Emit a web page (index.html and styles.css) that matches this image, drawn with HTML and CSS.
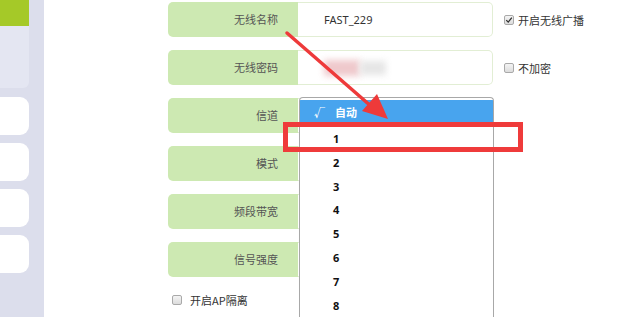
FILE: index.html
```html
<!DOCTYPE html>
<html lang="zh">
<head>
<meta charset="utf-8">
<link rel="stylesheet" href="styles.css">
</head>
<body>
<div class="page">
  <aside class="sidebar">
    <div class="nav-active"></div>
    <div class="nav-sub"></div>
    <div class="nav-item"></div>
    <div class="nav-item"></div>
    <div class="nav-item"></div>
    <div class="nav-item"></div>
  </aside>
  <main class="form">
    <div class="row">
      <div class="label">无线名称</div>
      <div class="field"><span class="value">FAST_229</span></div>
      <label class="opt"><span class="cb checked"><svg viewBox="0 0 10 10" width="8" height="8"><path d="M1.5 5.2 L4 7.6 L8.6 2" fill="none" stroke="#333" stroke-width="1.6"/></svg></span>开启无线广播</label>
    </div>
    <div class="row">
      <div class="label">无线密码</div>
      <div class="field"><span class="pw"><span class="pw-a"></span><span class="pw-b"></span></span></div>
      <label class="opt"><span class="cb"></span>不加密</label>
    </div>
    <div class="row">
      <div class="label">信道</div>
      <div class="field"></div>
    </div>
    <div class="row">
      <div class="label">模式</div>
      <div class="field"></div>
    </div>
    <div class="row">
      <div class="label">频段带宽</div>
      <div class="field"></div>
    </div>
    <div class="row">
      <div class="label">信号强度</div>
      <div class="field"></div>
    </div>
    <label class="ap"><span class="cb"></span>开启AP隔离</label>
  </main>
</div>

<div class="dropdown">
  <div class="dd-head"><span class="tick">√</span><span>自动</span></div>
  <ul class="dd-list">
    <li>1</li><li>2</li><li>3</li><li>4</li><li>5</li><li>6</li><li>7</li><li>8</li>
  </ul>
</div>

<div class="highlight"></div>

<svg class="arrow" width="620" height="317" viewBox="0 0 620 317">
  <line x1="287" y1="33" x2="372" y2="107" stroke="#ee3a3a" stroke-width="3.5" stroke-linecap="round"/>
  <polygon points="388,119 362,111 377,94" fill="#ee3a3a"/>
</svg>
</body>
</html>
```

FILE: styles.css
```css
* { box-sizing: border-box; }
html, body { margin: 0; padding: 0; }
body {
  width: 620px;
  height: 317px;
  overflow: hidden;
  background: #fff;
  font-family: "Noto Sans CJK SC", "Noto Sans", sans-serif;
  font-size: 11px;
  color: #444;
  position: relative;
}
.page { display: flex; height: 317px; }

.sidebar {
  width: 44px;
  flex: none;
  background: #dcdeec;
  display: flex;
  flex-direction: column;
}
.nav-active { width: 29px; height: 26px; background: #a5c928; }
.nav-sub {
  width: 29px; height: 62px;
  background: #e4e6f2;
  border-bottom-right-radius: 6px;
  margin-bottom: 9px;
}
.nav-item {
  width: 29px; height: 38px;
  background: #fff;
  border-radius: 0 9px 9px 0;
  margin-bottom: 8px;
}

.form {
  padding: 2px 0 0 124px;
  display: flex;
  flex-direction: column;
  gap: 13px;
}
.row { display: flex; align-items: center; height: 35px; }
.label {
  width: 130px; height: 35px;
  background: #cde9b2;
  border-radius: 5px 0 0 5px;
  text-align: right;
  padding-right: 20px;
  line-height: 35px;
  color: #555;
}
.field {
  width: 195px; height: 35px;
  border: 1px solid #e2eed4;
  border-left: none;
  border-radius: 0 5px 5px 0;
  display: flex;
  align-items: center;
  padding-left: 26px;
}
.value { color: #333; font-family: "Noto Sans", sans-serif; font-size: 11px; }
.pw { display: flex; align-items: center; }
.pw-a { width: 36px; height: 16px; background: #efc9cc; filter: blur(3px); }
.pw-b { width: 26px; height: 14px; background: #e6e6e6; filter: blur(3px); }

.opt { display: flex; align-items: center; margin-left: 11px; color: #333; }
.cb {
  width: 10px; height: 10px;
  border: 1px solid #a9a9a9;
  border-radius: 2px;
  background: linear-gradient(#f4f4f4, #dcdcdc);
  margin-right: 4px;
  display: inline-flex;
  align-items: center;
  justify-content: center;
}
.ap { display: flex; align-items: center; margin: 2px 0 0 4px; color: #333; }
.ap .cb { margin-right: 8px; }

.dropdown {
  position: absolute;
  left: 299px; top: 97px;
  width: 195px; height: 222px;
  border: 1px solid #a8a8a8;
  border-bottom: none;
  border-radius: 4px 4px 0 0;
  background: #fff;
  padding-top: 2px;
  overflow: hidden;
}
.dd-head {
  height: 23px;
  background: #48a4ee;
  color: #fff;
  font-weight: bold;
  display: flex;
  align-items: center;
  padding-left: 14px;
  gap: 10px;
}
.tick { font-weight: bold; }
.dd-list {
  list-style: none;
  margin: 0;
  padding: 4px 0 0 0;
}
.dd-list li {
  height: 23.8px;
  line-height: 24px;
  padding-left: 33px;
  font-weight: bold;
  color: #111;
  font-family: "Noto Sans", sans-serif;
  font-size: 11px;
}

.highlight {
  position: absolute;
  left: 283px; top: 122px;
  width: 240px; height: 30px;
  border: 5px solid #ef3b3b;
}
.arrow { position: absolute; left: 0; top: 0; pointer-events: none; }
```
